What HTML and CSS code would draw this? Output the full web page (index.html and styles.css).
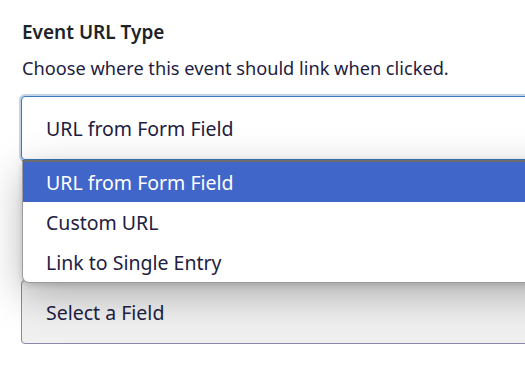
FILE: index.html
```html
<!DOCTYPE html>
<html>
<head>
<meta charset="utf-8">
<link rel="stylesheet" href="styles.css">
</head>
<body>
<div class="page">
  <div class="field">
    <h3 class="label">Event URL Type</h3>
    <p class="desc">Choose where this event should link when clicked.</p>
    <div class="select-wrap">
      <div class="select focused">URL from Form Field</div>
      <ul class="menu">
        <li class="opt active">URL from Form Field</li>
        <li class="opt">Custom URL</li>
        <li class="opt">Link to Single Entry</li>
      </ul>
    </div>
  </div>
  <div class="field second">
    <div class="select plain">Select a Field</div>
  </div>
</div>
</body>
</html>
```
FILE: styles.css
```css
html, body {
  margin: 0;
  padding: 0;
  background: #ffffff;
  overflow: hidden;
}
.page {
  width: 525px;
  height: 365px;
  padding: 0 0 0 21px;
  box-sizing: border-box;
  font-family: "Noto Sans", "Open Sans", sans-serif;
  color: #1d2040;
  overflow: hidden;
}
.label {
  margin: 0;
  padding-top: 20px;
  padding-left: 1px;
  font-size: 19px;
  font-weight: 600;
  line-height: 24px;
  color: #1d2327;
}
.desc {
  margin: 12px 0 0 1px;
  font-size: 18.2px;
  line-height: 24px;
  color: #1d2040;
}
.select-wrap {
  position: relative;
  margin-top: 16px;
  width: 560px;
}
.select {
  box-sizing: border-box;
  height: 64px;
  width: 560px;
  padding: 0 24px;
  display: flex;
  align-items: center;
  font-size: 19.5px;
  border-radius: 4px;
}
.select.focused {
  background: #ffffff;
  border: 1px solid #3b78c0;
  box-shadow: 0 0 0 2px #c3d4ea;
}
.menu {
  position: absolute;
  top: 64px;
  left: 1px;
  width: 560px;
  margin: 0;
  padding: 0;
  list-style: none;
  background: #ffffff;
  border: 1px solid #9c9c9c;
  border-top: 2px solid #6e6e6e;
  border-radius: 0 0 7px 7px;
  box-shadow: 0 12px 40px rgba(0, 0, 0, 0.28), 0 2px 6px rgba(0, 0, 0, 0.15);
  overflow: hidden;
  z-index: 2;
}
.opt {
  height: 40px;
  padding: 0 23px;
  display: flex;
  align-items: center;
  font-size: 19.5px;
  color: #1d2040;
}
.opt.active {
  background: #4066c9;
  color: #ffffff;
  height: 40px;
}
.second {
  margin-top: 120px;
}
.select.plain {
  width: 560px;
  height: 64px;
  background: #f0f0f1;
  border: 1px solid #8a88a8;
  color: #1d2040;
}
```
